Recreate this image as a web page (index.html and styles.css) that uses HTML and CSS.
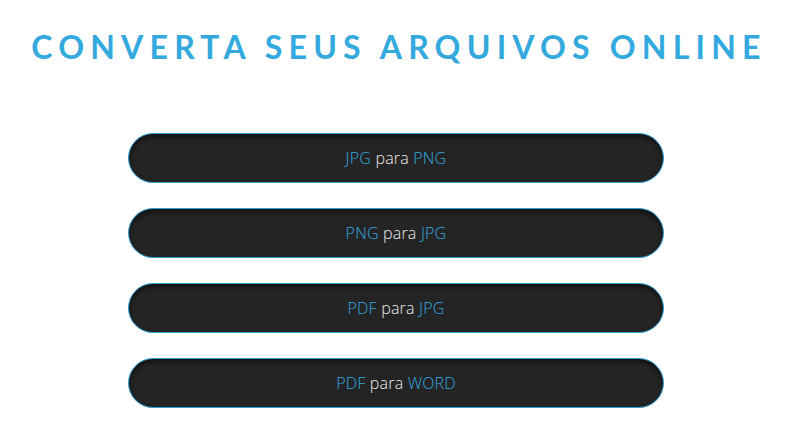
FILE: index.html
```html
<!DOCTYPE html>
<html lang="pt">
<head>
<meta charset="utf-8">
<link rel="stylesheet" href="styles.css">
</head>
<body>
<header class="top">
  <h1 class="title">CONVERTA SEUS ARQUIVOS ONLINE</h1>
</header>
<main class="list">
  <a class="btn" href="#"><span class="label"><span class="hl">JPG</span> para <span class="hl">PNG</span></span></a>
  <a class="btn" href="#"><span class="label"><span class="hl">PNG</span> para <span class="hl">JPG</span></span></a>
  <a class="btn" href="#"><span class="label"><span class="hl">PDF</span> para <span class="hl">JPG</span></span></a>
  <a class="btn" href="#"><span class="label"><span class="hl">PDF</span> para <span class="hl">WORD</span></span></a>
</main>
</body>
</html>
```

FILE: styles.css
```css
* { box-sizing: border-box; }
html, body { margin: 0; padding: 0; background: #ffffff; }
body { font-family: "Lato", "Open Sans", sans-serif; }
.top { padding-top: 28px; text-align: center; }
.title {
  margin: 0;
  font-family: "Lato", sans-serif;
  font-weight: 700;
  font-size: 32px;
  line-height: 38px;
  letter-spacing: 6.2px;
  color: #33a9de;
  padding-left: 6px;
}
.list {
  margin-top: 67px;
  display: flex;
  flex-direction: column;
  align-items: center;
  gap: 25px;
}
.btn {
  display: flex;
  align-items: center;
  justify-content: center;
  width: 536px;
  height: 50px;
  border-radius: 25px;
  border: 1px solid #2aa3d8;
  background: #242424;
  box-shadow: inset 0 3px 5px rgba(0,0,0,0.55);
  color: #ececec;
  text-decoration: none;
}
.label {
  font-family: "Open Sans", sans-serif;
  font-size: 16px;
  font-weight: 300;
  white-space: pre;
  letter-spacing: 0.2px;
}
.hl { color: #30acE2; }
```
